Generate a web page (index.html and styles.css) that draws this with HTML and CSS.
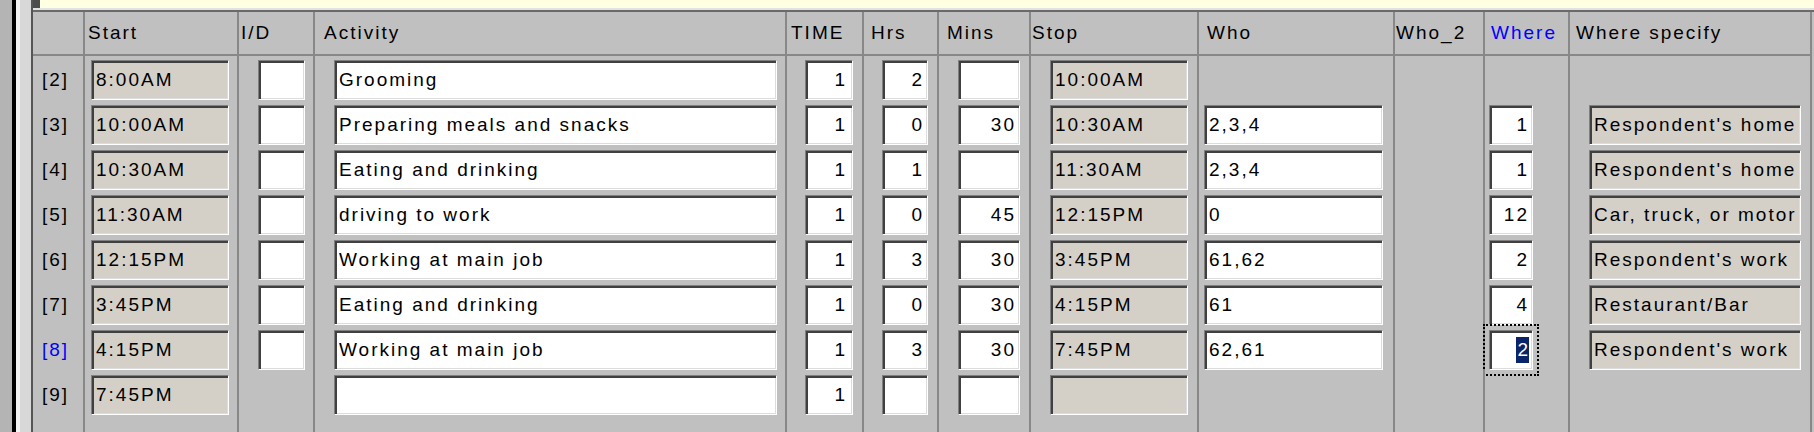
FILE: index.html
```html
<!DOCTYPE html>
<html lang="en">
<head>
<meta charset="utf-8">
<title>Activity diary grid</title>
<link rel="stylesheet" href="styles.css">
</head>
<body>
<div class="window">
  <div class="edge-out"></div>
  <div class="edge-black"></div>
  <div class="edge-hi"></div>
  <div class="edge-face"></div>
  <div class="panel">
    <div class="note-bar"><div class="note-grip"></div><div class="note"></div></div>
    <div class="note-gap"></div>
    <div class="grid">
      <div class="cell hd"></div>
      <div class="cell hd h-start">Start</div>
      <div class="cell hd h-id">I/D</div>
      <div class="cell hd h-act">Activity</div>
      <div class="cell hd h-time">TIME</div>
      <div class="cell hd h-hrs">Hrs</div>
      <div class="cell hd h-min">Mins</div>
      <div class="cell hd h-stop">Stop</div>
      <div class="cell hd h-who">Who</div>
      <div class="cell hd h-who2">Who_2</div>
      <div class="cell hd h-where link">Where</div>
      <div class="cell hd h-spec">Where specify</div>

      <div class="cell c-lbl"><span class="lbl">[2]</span></div>
      <div class="cell c-start"><div class="fld ro">8:00AM</div></div>
      <div class="cell c-id"><div class="fld"></div></div>
      <div class="cell c-act"><div class="fld">Grooming</div></div>
      <div class="cell c-time"><div class="fld num">1</div></div>
      <div class="cell c-hrs"><div class="fld num">2</div></div>
      <div class="cell c-min"><div class="fld num"></div></div>
      <div class="cell c-stop"><div class="fld ro">10:00AM</div></div>
      <div class="cell c-who"></div>
      <div class="cell c-who2"></div>
      <div class="cell c-where"></div>
      <div class="cell c-spec"></div>

      <div class="cell c-lbl"><span class="lbl">[3]</span></div>
      <div class="cell c-start"><div class="fld ro">10:00AM</div></div>
      <div class="cell c-id"><div class="fld"></div></div>
      <div class="cell c-act"><div class="fld">Preparing meals and snacks</div></div>
      <div class="cell c-time"><div class="fld num">1</div></div>
      <div class="cell c-hrs"><div class="fld num">0</div></div>
      <div class="cell c-min"><div class="fld num">30</div></div>
      <div class="cell c-stop"><div class="fld ro">10:30AM</div></div>
      <div class="cell c-who"><div class="fld">2,3,4</div></div>
      <div class="cell c-who2"></div>
      <div class="cell c-where"><div class="fld num">1</div></div>
      <div class="cell c-spec"><div class="fld ro">Respondent's home</div></div>

      <div class="cell c-lbl"><span class="lbl">[4]</span></div>
      <div class="cell c-start"><div class="fld ro">10:30AM</div></div>
      <div class="cell c-id"><div class="fld"></div></div>
      <div class="cell c-act"><div class="fld">Eating and drinking</div></div>
      <div class="cell c-time"><div class="fld num">1</div></div>
      <div class="cell c-hrs"><div class="fld num">1</div></div>
      <div class="cell c-min"><div class="fld num"></div></div>
      <div class="cell c-stop"><div class="fld ro">11:30AM</div></div>
      <div class="cell c-who"><div class="fld">2,3,4</div></div>
      <div class="cell c-who2"></div>
      <div class="cell c-where"><div class="fld num">1</div></div>
      <div class="cell c-spec"><div class="fld ro">Respondent's home</div></div>

      <div class="cell c-lbl"><span class="lbl">[5]</span></div>
      <div class="cell c-start"><div class="fld ro">11:30AM</div></div>
      <div class="cell c-id"><div class="fld"></div></div>
      <div class="cell c-act"><div class="fld">driving to work</div></div>
      <div class="cell c-time"><div class="fld num">1</div></div>
      <div class="cell c-hrs"><div class="fld num">0</div></div>
      <div class="cell c-min"><div class="fld num">45</div></div>
      <div class="cell c-stop"><div class="fld ro">12:15PM</div></div>
      <div class="cell c-who"><div class="fld">0</div></div>
      <div class="cell c-who2"></div>
      <div class="cell c-where"><div class="fld num">12</div></div>
      <div class="cell c-spec"><div class="fld ro">Car, truck, or motor</div></div>

      <div class="cell c-lbl"><span class="lbl">[6]</span></div>
      <div class="cell c-start"><div class="fld ro">12:15PM</div></div>
      <div class="cell c-id"><div class="fld"></div></div>
      <div class="cell c-act"><div class="fld">Working at main job</div></div>
      <div class="cell c-time"><div class="fld num">1</div></div>
      <div class="cell c-hrs"><div class="fld num">3</div></div>
      <div class="cell c-min"><div class="fld num">30</div></div>
      <div class="cell c-stop"><div class="fld ro">3:45PM</div></div>
      <div class="cell c-who"><div class="fld">61,62</div></div>
      <div class="cell c-who2"></div>
      <div class="cell c-where"><div class="fld num">2</div></div>
      <div class="cell c-spec"><div class="fld ro">Respondent's work</div></div>

      <div class="cell c-lbl"><span class="lbl">[7]</span></div>
      <div class="cell c-start"><div class="fld ro">3:45PM</div></div>
      <div class="cell c-id"><div class="fld"></div></div>
      <div class="cell c-act"><div class="fld">Eating and drinking</div></div>
      <div class="cell c-time"><div class="fld num">1</div></div>
      <div class="cell c-hrs"><div class="fld num">0</div></div>
      <div class="cell c-min"><div class="fld num">30</div></div>
      <div class="cell c-stop"><div class="fld ro">4:15PM</div></div>
      <div class="cell c-who"><div class="fld">61</div></div>
      <div class="cell c-who2"></div>
      <div class="cell c-where"><div class="fld num">4</div></div>
      <div class="cell c-spec"><div class="fld ro">Restaurant/Bar</div></div>

      <div class="cell c-lbl"><span class="lbl link">[8]</span></div>
      <div class="cell c-start"><div class="fld ro">4:15PM</div></div>
      <div class="cell c-id"><div class="fld"></div></div>
      <div class="cell c-act"><div class="fld">Working at main job</div></div>
      <div class="cell c-time"><div class="fld num">1</div></div>
      <div class="cell c-hrs"><div class="fld num">3</div></div>
      <div class="cell c-min"><div class="fld num">30</div></div>
      <div class="cell c-stop"><div class="fld ro">7:45PM</div></div>
      <div class="cell c-who"><div class="fld">62,61</div></div>
      <div class="cell c-who2"></div>
      <div class="cell c-where"><div class="fld num focus"><span class="sel">2</span></div></div>
      <div class="cell c-spec"><div class="fld ro">Respondent's work</div></div>

      <div class="cell c-lbl"><span class="lbl">[9]</span></div>
      <div class="cell c-start"><div class="fld ro">7:45PM</div></div>
      <div class="cell c-id"></div>
      <div class="cell c-act"><div class="fld"></div></div>
      <div class="cell c-time"><div class="fld num">1</div></div>
      <div class="cell c-hrs"><div class="fld num"></div></div>
      <div class="cell c-min"><div class="fld num"></div></div>
      <div class="cell c-stop"><div class="fld ro"></div></div>
      <div class="cell c-who"></div>
      <div class="cell c-who2"></div>
      <div class="cell c-where"></div>
      <div class="cell c-spec"></div>

      <div class="cell"></div><div class="cell"></div><div class="cell"></div><div class="cell"></div>
      <div class="cell"></div><div class="cell"></div><div class="cell"></div><div class="cell"></div>
      <div class="cell"></div><div class="cell"></div><div class="cell"></div><div class="cell"></div>
    </div>
  </div>
</div>
</body>
</html>
```

FILE: styles.css
```css
html, body {
  margin: 0;
  padding: 0;
}
body {
  width: 1814px;
  height: 432px;
  overflow: hidden;
  background: #c0c0c0;
  font-family: "Liberation Sans", Arial, sans-serif;
  font-size: 19px;
  letter-spacing: 2px;
  color: #000;
}
.window {
  display: flex;
  height: 432px;
}
.edge-out { width: 12px; background: #b4b4b4; }
.edge-black { width: 4px; background: #000; }
.edge-hi { width: 4px; background: #f4f4f4; }
.edge-face { width: 11px; background: #d8d8d8; }

.panel {
  flex: 1;
  min-width: 0;
  display: flex;
  flex-direction: column;
  border-left: 2px solid #555;
}
.note-bar {
  display: flex;
  height: 8px;
}
.note-grip { width: 7px; background: #4c4c4c; }
.note { flex: 1; background: #ffffe1; }
.note-gap { height: 2px; background: #e2e2e2; }

.grid {
  flex: 1;
  display: grid;
  grid-template-columns: 52px 154px 76px 472px 77px 75px 92px 168px 196px 90px 85px 242px;
  grid-template-rows: 44px repeat(8, 45px) 1fr;
  border-top: 2px solid #6a6a6a;
}
.cell {
  box-sizing: border-box;
  min-width: 0;
  border-right: 2px solid #888;
  padding-top: 4px;
}
.hd {
  padding-top: 0;
  border-bottom: 2px solid #888;
  display: flex;
  align-items: center;
  white-space: nowrap;
  overflow: hidden;
}
.h-start { padding-left: 3px; }
.h-id { padding-left: 2px; }
.h-act { padding-left: 9px; }
.h-time { padding-left: 4px; }
.h-hrs { padding-left: 7px; }
.h-min { padding-left: 8px; }
.h-stop { padding-left: 1px; }
.h-who { padding-left: 8px; }
.h-who2 { padding-left: 1px; }
.h-where { padding-left: 6px; }
.h-spec { padding-left: 6px; }

.link { color: #0000ff; }

.c-lbl { padding-left: 9px; }
.lbl {
  display: block;
  height: 40px;
  line-height: 40px;
}

.fld {
  box-sizing: border-box;
  height: 40px;
  background: #fff;
  border: 1px solid;
  border-color: #808080 #ffffff #ffffff #808080;
  box-shadow: inset 2px 2px 0 #404040, inset -1px -1px 0 #dcdcdc;
  display: flex;
  align-items: center;
  padding: 0 3px 0 4px;
  white-space: nowrap;
  overflow: hidden;
}
.ro { background: #d4d0c8; }
.num { justify-content: flex-end; }

.c-start .fld { margin-left: 6px; width: 138px; }
.c-id .fld { margin-left: 19px; width: 47px; }
.c-act .fld { margin-left: 19px; width: 443px; }
.c-time .fld { margin-left: 18px; width: 48px; padding-right: 5px; }
.c-hrs .fld { margin-left: 18px; width: 46px; }
.c-min .fld { margin-left: 19px; width: 62px; }
.c-stop .fld { margin-left: 19px; width: 138px; }
.c-who .fld { margin-left: 5px; width: 179px; }
.c-where .fld { margin-left: 4px; width: 44px; }
.c-spec .fld { margin-left: 19px; width: 212px; }

.focus {
  outline: 2px dotted #000;
  outline-offset: 4px;
}
.sel {
  display: inline-block;
  letter-spacing: 0;
  line-height: 26px;
  padding: 0 1px;
  background: #0a246a;
  color: #fff;
}
```
